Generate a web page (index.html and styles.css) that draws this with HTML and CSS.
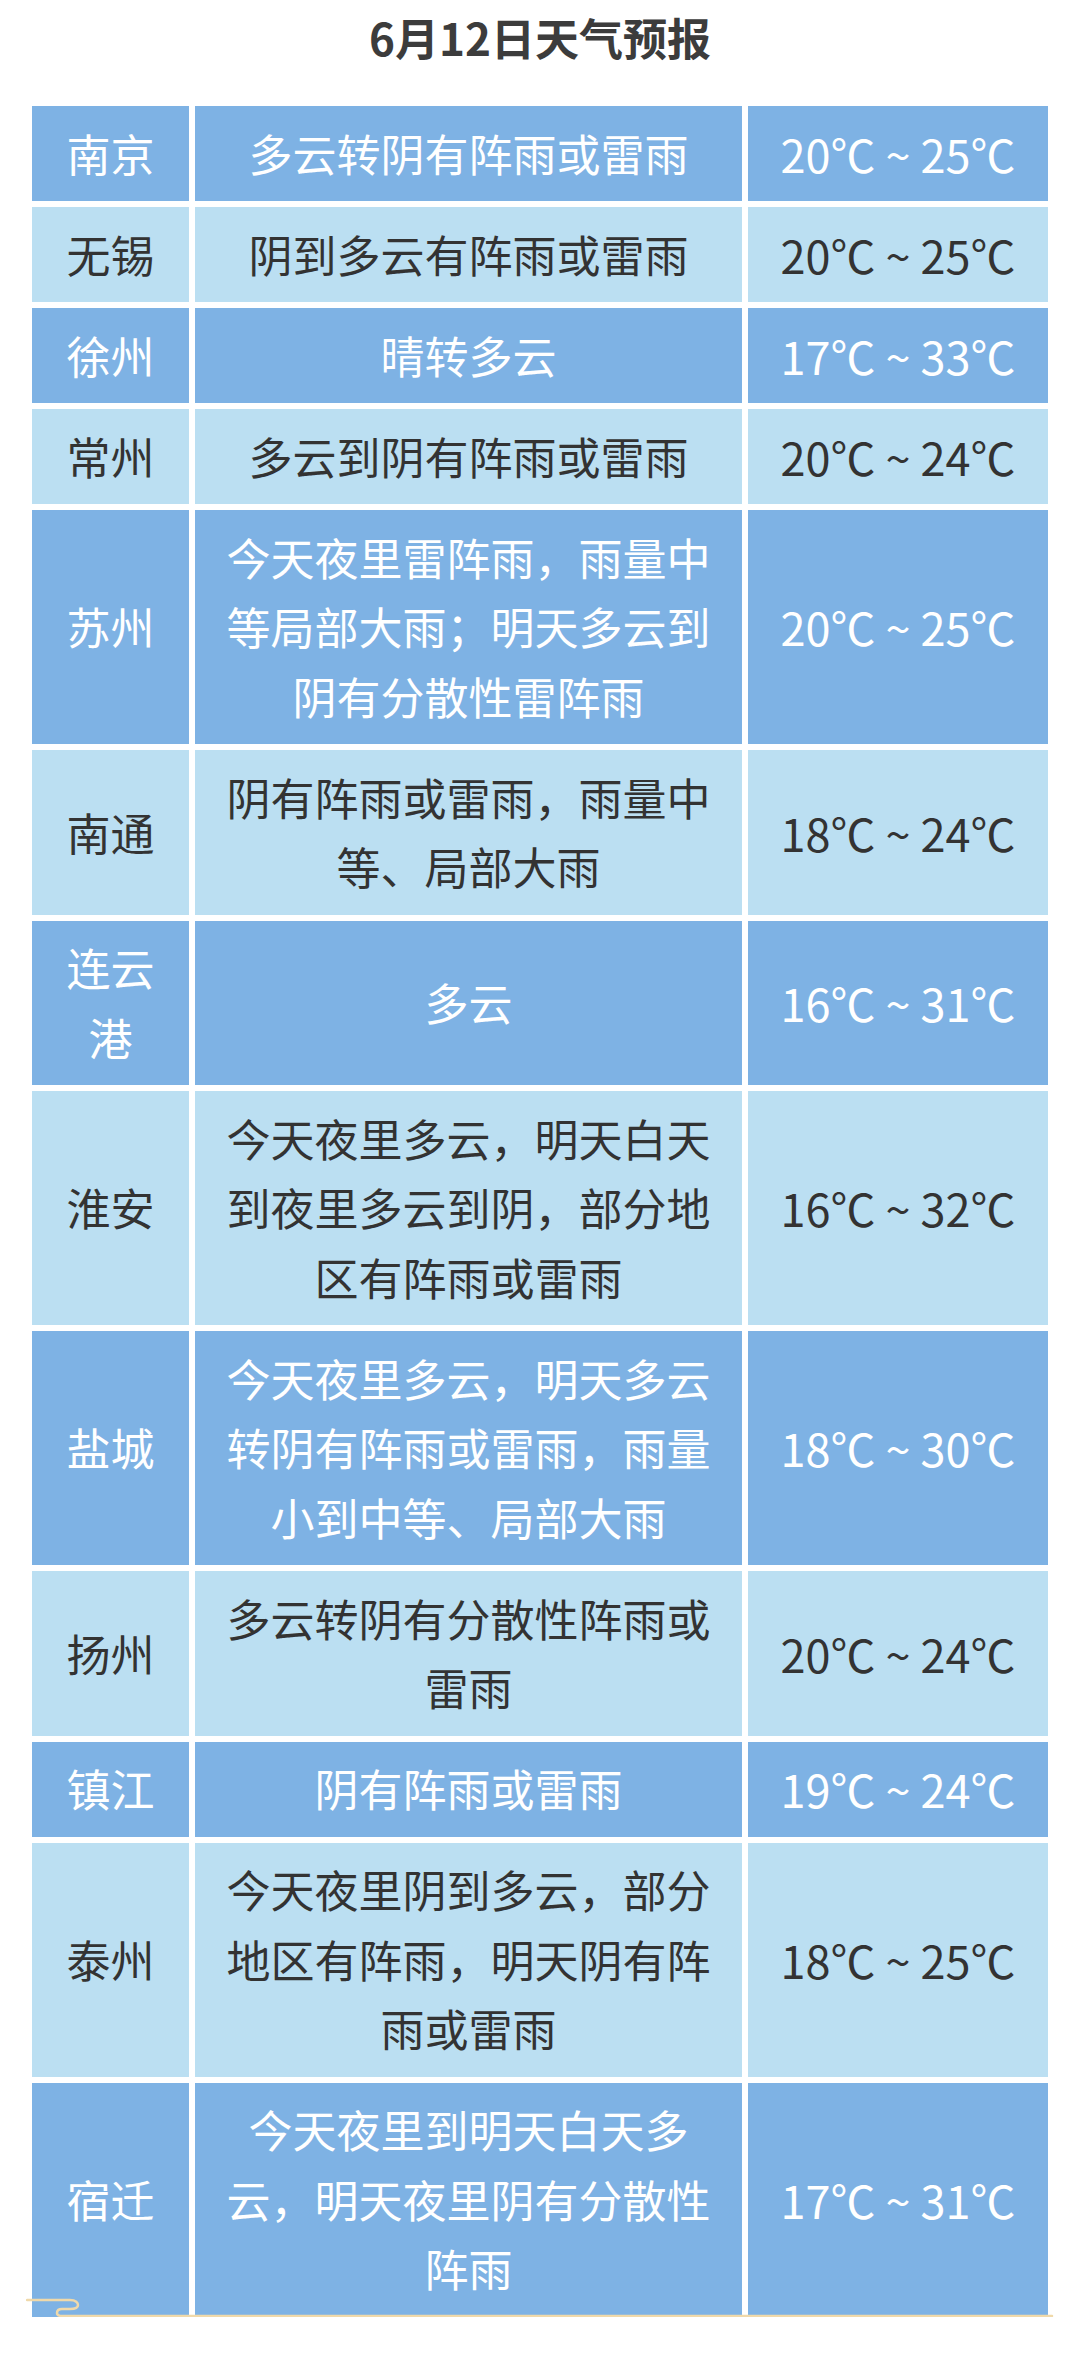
FILE: index.html
```html
<!DOCTYPE html>
<html lang="zh-CN">
<head>
<meta charset="utf-8">
<title>6月12日天气预报</title>
<link rel="stylesheet" href="styles.css">
</head>
<body>
<div class="page">
  <h1 class="title">6月12日天气预报</h1>
  <div class="table-wrap">
    <div class="table">
      <div class="row dark"><div class="cell city">南京</div><div class="cell desc">多云转阴有阵雨或雷雨</div><div class="cell temp">20℃ ~ 25℃</div></div>
      <div class="row light"><div class="cell city">无锡</div><div class="cell desc">阴到多云有阵雨或雷雨</div><div class="cell temp">20℃ ~ 25℃</div></div>
      <div class="row dark"><div class="cell city">徐州</div><div class="cell desc">晴转多云</div><div class="cell temp">17℃ ~ 33℃</div></div>
      <div class="row light"><div class="cell city">常州</div><div class="cell desc">多云到阴有阵雨或雷雨</div><div class="cell temp">20℃ ~ 24℃</div></div>
      <div class="row dark"><div class="cell city">苏州</div><div class="cell desc">今天夜里雷阵雨，雨量中等局部大雨；明天多云到阴有分散性雷阵雨</div><div class="cell temp">20℃ ~ 25℃</div></div>
      <div class="row light"><div class="cell city">南通</div><div class="cell desc">阴有阵雨或雷雨，雨量中等、局部大雨</div><div class="cell temp">18℃ ~ 24℃</div></div>
      <div class="row dark"><div class="cell city">连云港</div><div class="cell desc">多云</div><div class="cell temp">16℃ ~ 31℃</div></div>
      <div class="row light"><div class="cell city">淮安</div><div class="cell desc">今天夜里多云，明天白天到夜里多云到阴，部分地区有阵雨或雷雨</div><div class="cell temp">16℃ ~ 32℃</div></div>
      <div class="row dark"><div class="cell city">盐城</div><div class="cell desc">今天夜里多云，明天多云转阴有阵雨或雷雨，雨量小到中等、局部大雨</div><div class="cell temp">18℃ ~ 30℃</div></div>
      <div class="row light"><div class="cell city">扬州</div><div class="cell desc">多云转阴有分散性阵雨或雷雨</div><div class="cell temp">20℃ ~ 24℃</div></div>
      <div class="row dark"><div class="cell city">镇江</div><div class="cell desc">阴有阵雨或雷雨</div><div class="cell temp">19℃ ~ 24℃</div></div>
      <div class="row light"><div class="cell city">泰州</div><div class="cell desc">今天夜里阴到多云，部分地区有阵雨，明天阴有阵雨或雷雨</div><div class="cell temp">18℃ ~ 25℃</div></div>
      <div class="row dark"><div class="cell city">宿迁</div><div class="cell desc">今天夜里到明天白天多云，明天夜里阴有分散性阵雨</div><div class="cell temp">17℃ ~ 31℃</div></div>
    </div>
    <svg class="deco" width="1032" height="22" viewBox="0 0 1032 22" xmlns="http://www.w3.org/2000/svg">
      <path d="M1 2 H44 C50 2 52 5 52 7 C52 10 48 11 44 11 H36 C32 11 31 13 31 15 C31 17 33 18 36 18 H1026" fill="none" stroke="#f0d9aa" stroke-width="2.5" stroke-linecap="round" stroke-linejoin="round"/>
    </svg>
  </div>
</div>
</body>
</html>
```

FILE: styles.css
```css
html, body {
  margin: 0;
  padding: 0;
  background: #ffffff;
}

body {
  font-family: "Noto Sans CJK SC", "Noto Sans", sans-serif;
  width: 1080px;
}

.page {
  padding: 12px 32px 0 32px;
}

.title {
  margin: 0 0 44px 0;
  font-size: 44px;
  line-height: 50px;
  font-weight: 700;
  color: #3c3c3c;
  text-align: center;
}

.table-wrap {
  position: relative;
  width: 1016px;
}

.table {
  display: grid;
  grid-template-columns: 157px 547px 300px;
  column-gap: 6px;
  row-gap: 6px;
}

.row {
  display: contents;
}

.cell {
  display: flex;
  align-items: center;
  justify-content: center;
  text-align: center;
  font-size: 44px;
  line-height: 69.5px;
  padding: 12.75px 0;
}

.city {
  padding-left: 18px;
  padding-right: 18px;
}

.desc {
  padding-left: 22px;
  padding-right: 22px;
}

.temp {
  font-size: 45px;
  padding-left: 8px;
  padding-right: 8px;
  white-space: nowrap;
}

.row.dark > .cell {
  background: #7eb2e4;
  color: #ffffff;
}

.row.light > .cell {
  background: #bbdff2;
  color: #333333;
}

.deco {
  position: absolute;
  left: -6px;
  bottom: -3px;
}
```
